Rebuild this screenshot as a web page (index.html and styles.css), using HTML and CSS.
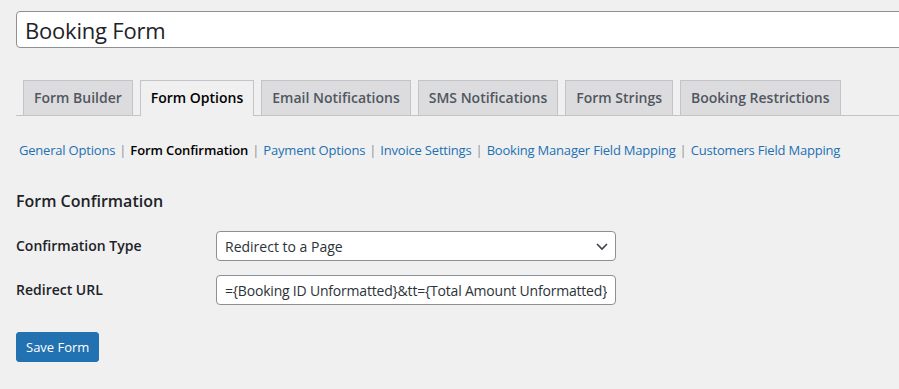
FILE: index.html
```html
<!DOCTYPE html>
<html lang="en">
<head>
    <meta charset="UTF-8">
    <meta name="viewport" content="width=device-width, initial-scale=1.0">
    <title>Booking Form</title>
    <link rel="stylesheet" href="styles.css">
</head>
<body>
    <div class="wrap">
        <input class="title-input" type="text" value="Booking Form">

        <nav class="nav-tabs">
            <a href="#" class="nav-tab">Form Builder</a>
            <a href="#" class="nav-tab active">Form Options</a>
            <a href="#" class="nav-tab">Email Notifications</a>
            <a href="#" class="nav-tab">SMS Notifications</a>
            <a href="#" class="nav-tab">Form Strings</a>
            <a href="#" class="nav-tab">Booking Restrictions</a>
        </nav>

        <ul class="sub-nav">
            <li><a href="#">General Options</a><span class="sep">|</span></li>
            <li><a href="#" class="current">Form Confirmation</a><span class="sep">|</span></li>
            <li><a href="#">Payment Options</a><span class="sep">|</span></li>
            <li><a href="#">Invoice Settings</a><span class="sep">|</span></li>
            <li><a href="#">Booking Manager Field Mapping</a><span class="sep">|</span></li>
            <li><a href="#">Customers Field Mapping</a></li>
        </ul>

        <h2 class="section-title">Form Confirmation</h2>

        <div class="form-row">
            <label class="field-label" for="confirmation-type">Confirmation Type</label>
            <div class="select-wrap">
                <select id="confirmation-type" class="field">
                    <option>Redirect to a Page</option>
                </select>
                <svg class="chevron" width="16" height="16" viewBox="0 0 16 16">
                    <path d="M3 6 L8 11 L13 6" fill="none" stroke="#3c434a" stroke-width="1.6"/>
                </svg>
            </div>
        </div>
        <div class="form-row">
            <label class="field-label" for="redirect-url">Redirect URL</label>
            <input id="redirect-url" class="field url-field" type="text" value="={Booking ID Unformatted}&amp;tt={Total Amount Unformatted}">
        </div>

        <button class="btn-primary">Save Form</button>
    </div>
</body>
</html>
```

FILE: styles.css
```css
body {
    margin: 0;
    padding: 0;
    background-color: #f0f0f1;
    font-family: 'Open Sans', sans-serif;
    color: #3c434a;
    overflow-x: hidden;
}
.wrap {
    padding: 11px 0 0 16px;
}
.title-input {
    display: block;
    box-sizing: border-box;
    width: calc(100% + 40px);
    height: 37px;
    margin: 0;
    padding: 0 8px;
    font-family: inherit;
    font-size: 22px;
    letter-spacing: -0.2px;
    color: #1d2327;
    background-color: #fff;
    border: 1px solid #8c8f94;
    border-radius: 4px;
}
.nav-tabs {
    display: flex;
    margin-top: 32px;
    border-bottom: 1px solid #c3c4c7;
}
.nav-tab {
    margin-left: 7px;
    padding: 5px 10px;
    font-size: 14px;
    font-weight: 600;
    line-height: 24px;
    color: #50575e;
    text-decoration: none;
    background-color: #dcdcde;
    border: 1px solid #c3c4c7;
    border-bottom: none;
}
.nav-tab.active {
    color: #000;
    background-color: #f0f0f1;
    margin-bottom: -1px;
    padding-bottom: 6px;
}
.sub-nav {
    display: flex;
    margin: 24px 0 0;
    padding: 0 0 0 3px;
    list-style: none;
    font-size: 13px;
    line-height: 20px;
}
.sub-nav a {
    color: #2271b1;
    text-decoration: none;
    letter-spacing: -0.2px;
}
.sub-nav a.current {
    color: #000;
    font-weight: 600;
    letter-spacing: -0.1px;
}
.sep {
    margin: 0 4px;
    color: #8c8f94;
}
.section-title {
    margin: 31px 0 0;
    font-size: 16px;
    line-height: 20px;
    font-weight: 600;
    color: #1d2327;
}
.form-row {
    display: flex;
    align-items: center;
    margin-top: 14px;
}
.section-title + .form-row {
    margin-top: 20px;
}
.field-label {
    width: 200px;
    margin-top: -2px;
    font-size: 14px;
    font-weight: 600;
    color: #1d2327;
}
.select-wrap {
    position: relative;
}
.field {
    box-sizing: border-box;
    width: 400px;
    height: 30px;
    margin: 0;
    padding: 0 8px;
    font-family: inherit;
    font-size: 14px;
    color: #2c3338;
    background-color: #fff;
    border: 1px solid #8c8f94;
    border-radius: 4px;
}
select.field {
    appearance: none;
    padding-right: 24px;
}
.url-field {
    letter-spacing: -0.2px;
}
.chevron {
    position: absolute;
    right: 6px;
    top: 7px;
    pointer-events: none;
}
.btn-primary {
    display: block;
    height: 30px;
    margin-top: 27px;
    padding: 0 9px;
    font-family: inherit;
    font-size: 13px;
    color: #fff;
    background-color: #2271b1;
    border: 1px solid #2271b1;
    border-radius: 3px;
    cursor: pointer;
}
```
